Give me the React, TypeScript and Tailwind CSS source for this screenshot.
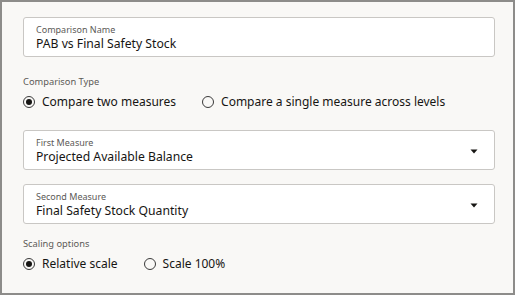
import React from 'react';

const font = { fontFamily: '"Noto Sans", "Open Sans", sans-serif' };

const Radio: React.FC<{ checked?: boolean; label: string }> = ({ checked, label }) => (
  <label className="flex items-center gap-[7px] text-[12px] text-[#161513]">
    <span className="w-[12px] h-[12px] rounded-full border border-[#3a3a3a] flex items-center justify-center">
      {checked && <span className="w-[6px] h-[6px] rounded-full bg-[#161513]"></span>}
    </span>
    {label}
  </label>
);

const Field: React.FC<{ label: string; value: string; select?: boolean }> = ({ label, value, select }) => (
  <div className="h-[40px] bg-white border border-[#c9c7c4] rounded-[3px] pl-[12px] pr-[16px] flex items-center">
    <div className="flex-1 pt-[1px]">
      <div className="text-[9px] leading-[11px] text-[#5c5a57]">{label}</div>
      <div className="text-[12.2px] leading-[17px] text-[#161513]">{value}</div>
    </div>
    {select && (
      <svg width="8" height="5" viewBox="0 0 8 5" className="mt-[2px]">
        <path d="M0.5 0.5 H7.5 L4 4.5 Z" fill="#161513" />
      </svg>
    )}
  </div>
);

export default function App() {
  return (
    <div className="w-[516px] h-[296px] bg-white" style={font}>
      <div className="w-[515px] h-[295px] bg-[#f9f8f6] border-2 border-[#8d8c8a] pl-[21px] pr-[18px] pt-[15px]">
        <Field label="Comparison Name" value="PAB vs Final Safety Stock" />

        <div className="mt-[19px] text-[9.3px] text-[#5c5a57] leading-[12px]">Comparison Type</div>
        <div className="mt-[5px] flex items-center gap-[26px] h-[18px]">
          <Radio checked label="Compare two measures" />
          <Radio label="Compare a single measure across levels" />
        </div>

        <div className="mt-[19px]">
          <Field label="First Measure" value="Projected Available Balance" select />
        </div>
        <div className="mt-[14px]">
          <Field label="Second Measure" value="Final Safety Stock Quantity" select />
        </div>

        <div className="mt-[14px] text-[9.3px] text-[#5c5a57] leading-[12px]">Scaling options</div>
        <div className="mt-[5px] flex items-center gap-[26px] h-[18px]">
          <Radio checked label="Relative scale" />
          <Radio label="Scale 100%" />
        </div>
      </div>
    </div>
  );
}
